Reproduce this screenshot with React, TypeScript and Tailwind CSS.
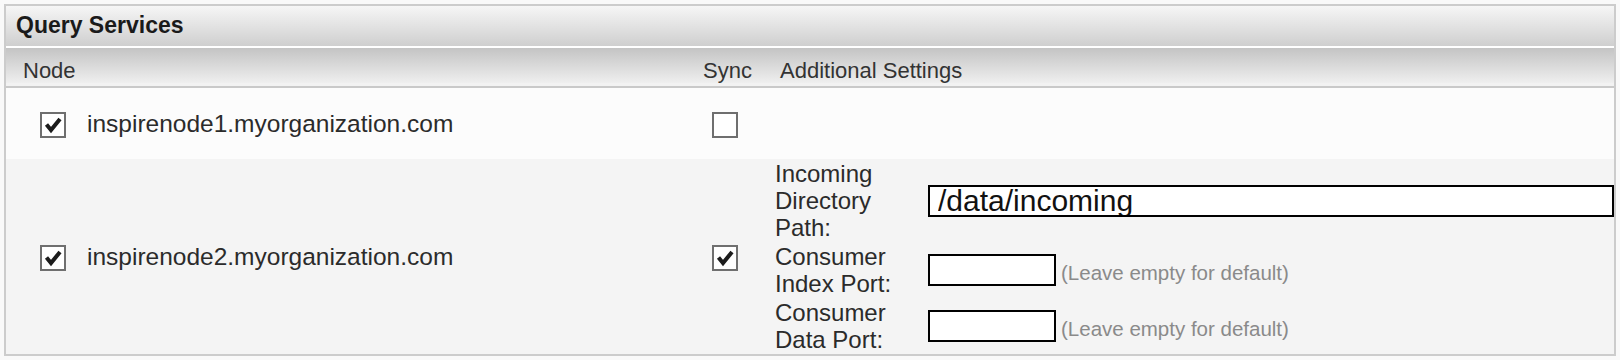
import React from "react";

function Check({ checked }: { checked: boolean }) {
  return (
    <div className="w-[26px] h-[26px] shrink-0 border-2 border-[#6f6f6f] bg-white">
      {checked && (
        <svg width="22" height="22" viewBox="0 0 22 22">
          <polyline points="4.5,10.5 9,16 18,5" fill="none" stroke="#1c1c1c" strokeWidth="4" strokeLinejoin="miter" />
        </svg>
      )}
    </div>
  );
}

function NodeCell({ name, checked }: { name: string; checked: boolean }) {
  return (
    <div className="flex items-center pl-[34px] gap-[21px]">
      <Check checked={checked} />
      <span className="text-[24.5px] text-[#2b2b2b] whitespace-nowrap">{name}</span>
    </div>
  );
}

function Hint() {
  return <span className="text-[20.5px] text-[#8a8a8a] whitespace-nowrap">(Leave empty for default)</span>;
}

export default function App() {
  return (
    <div className="min-h-screen bg-[#f9f9f9] p-1 font-['Liberation_Sans',Arial,sans-serif]">
      <div className="w-[1612px] border-2 border-[#cccccc]">
        <div className="h-[40px] bg-linear-to-b from-[#f6f6f6] to-[#cfcfcf] pl-[10px] text-[23px] font-bold leading-[38px] text-[#1a1a1a]">
          Query Services
        </div>
        <div className="h-[2px] bg-white" />
        <div className="grid grid-cols-[680px_77px_1fr] h-[35px] bg-linear-to-b from-[#c4c4c4] to-[#efefef] text-[22px] leading-[24px] pt-[11px] text-[#333]">
          <div className="pl-[17px]">Node</div>
          <div className="pl-[17px]">Sync</div>
          <div className="pl-[17px] whitespace-nowrap">Additional Settings</div>
        </div>
        <div className="h-[3px] bg-[#f2f2f2]" />
        <div className="h-[2px] bg-[#c9c9c9]" />

        <div className="grid grid-cols-[680px_77px_1fr] h-[71px] bg-[#fcfcfc] items-center pt-[2px]">
          <NodeCell name="inspirenode1.myorganization.com" checked />
          <div className="pl-[26px]">
            <Check checked={false} />
          </div>
          <div />
        </div>

        <div className="grid grid-cols-[680px_77px_1fr] h-[195px] bg-[#f4f4f4]">
          <div className="flex items-center pt-[2px]">
            <NodeCell name="inspirenode2.myorganization.com" checked />
          </div>
          <div className="flex items-center pl-[26px] pt-[2px]">
            <Check checked />
          </div>
          <div className="flex flex-col pl-[12px] text-[24px] leading-[27px] text-[#2b2b2b]">
            <div className="h-[83px] py-[1px] flex items-center">
              <div className="w-[140px] mr-[13px] shrink-0">Incoming Directory Path:</div>
              <input
                readOnly
                defaultValue="/data/incoming"
                className="flex-1 min-w-0 h-[32px] border-2 border-black bg-white pl-[8px] text-[30px] text-[#111] outline-none font-['Liberation_Sans',Arial,sans-serif]"
              />
            </div>
            <div className="h-[56px] py-[1px] flex items-center">
              <div className="w-[140px] mr-[13px] shrink-0">Consumer Index Port:</div>
              <div className="flex items-end gap-[5px]">
                <input readOnly className="w-[128px] h-[32px] border-2 border-black bg-white outline-none" />
                <Hint />
              </div>
            </div>
            <div className="h-[56px] py-[1px] flex items-center">
              <div className="w-[140px] mr-[13px] shrink-0">Consumer Data Port:</div>
              <div className="flex items-end gap-[5px]">
                <input readOnly className="w-[128px] h-[32px] border-2 border-black bg-white outline-none" />
                <Hint />
              </div>
            </div>
          </div>
        </div>
      </div>
    </div>
  );
}
